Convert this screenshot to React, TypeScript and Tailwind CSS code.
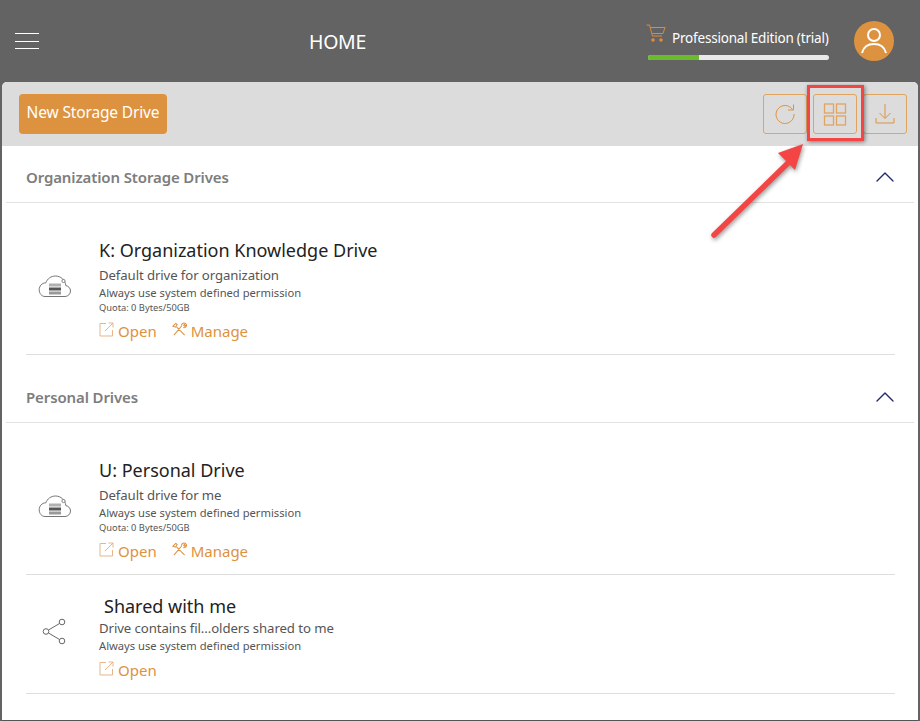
import { ChevronUp } from 'lucide-react'

const font = "font-['Noto_Sans','Open_Sans',sans-serif]"

function OpenIcon() {
  return (
    <svg width="15" height="15" viewBox="0 0 15 15" fill="none" stroke="#e8b58a" strokeWidth="1" className="mr-1 mt-[-3px]">
      <path d="M7 1.500H1v12.500h12.500V8" />
      <path d="M6 9l8-8M9.500 1H14v4.500" />
    </svg>
  )
}

function ToolsIcon() {
  return (
    <svg width="15" height="14" viewBox="0 0 16 15" fill="none" stroke="#dd9240" strokeWidth="1.100" className="ml-[1px] mr-1 mt-[-4px]">
      <path d="M2 14L10.500 4M1 4.500l3-3 1.500 1L4 5.500zM5 5.500l8.500 8.500M10 3.500c.5-2 2.500-3 4.500-2l-2 2 1 1 2-1.500c.3 2-1.500 3.500-3.500 3" />
    </svg>
  )
}

function CloudIcon() {
  return (
    <svg width="34" height="24" viewBox="0 0 34 24" fill="none">
      <path
        d="M7 22.500h20c3 0 5.500-2.500 5.500-5.500 0-2.800-2-5-4.700-5.400-.4-5.500-5-9.600-10.300-9.600-4.500 0-8.300 2.800-9.700 6.900C4 8.800 1.200 12 1.200 15.800c0 3.700 2.500 6.700 5.800 6.700z"
        stroke="#666"
        strokeWidth="0.9"
      />
      <circle cx="25.500" cy="7" r="1.600" fill="#fff" stroke="#666" strokeWidth="0.8" />
      <rect x="11" y="9.500" width="12" height="3" fill="#b0b0b0" />
      <rect x="11" y="13.500" width="12" height="3" fill="#555" />
      <rect x="11" y="17.500" width="12" height="3" fill="#999" />
    </svg>
  )
}

function ShareIcon() {
  return (
    <svg width="24" height="27" viewBox="0 0 24 27" fill="none" stroke="#666" strokeWidth="1">
      <circle cx="20" cy="4" r="2.800" />
      <circle cx="4" cy="13.500" r="2.800" />
      <circle cx="20" cy="23" r="2.800" />
      <path d="M17.500 5.500L6.500 12M6.500 15L17.500 21.500" />
    </svg>
  )
}

function SectionHeader({ title }: { title: string }) {
  return (
    <div className="mx-[4px] flex h-[57px] items-center justify-between border-b border-[#e2e2e2] pl-[20px] pr-[13px] pt-[6px]">
      <span className="text-[15px] font-semibold tracking-[-0.12px] text-[#7d7d7d]">{title}</span>
      <ChevronUp size={32} strokeWidth={1} className="text-[#1e2a6a]" />
    </div>
  )
}

function Actions({ manage }: { manage?: boolean }) {
  return (
    <div className="flex items-center text-[15px] leading-[20px] text-[#dd9240]">
      <OpenIcon />
      <span>Open</span>
      {manage && (
        <>
          <span className="w-[14px]" />
          <ToolsIcon />
          <span>Manage</span>
        </>
      )}
    </div>
  )
}

function DriveItem({ title, desc, manage }: { title: string; desc: string; manage?: boolean }) {
  return (
    <div className="ml-[24px] mr-[23px] flex h-[152px] border-b border-[#dedede]">
      <div className="w-[73px] pl-[12px] pt-[71px]">
        <CloudIcon />
      </div>
      <div className="pt-[34px]">
        <div className="text-[18px] leading-[26px] text-[#222]">{title}</div>
        <div className="mt-[3px] text-[13.200px] leading-[18px] tracking-[-0.1px] text-[#555]">{desc}</div>
        <div className="mt-[1px] text-[11.200px] leading-[16px] text-[#555]">Always use system defined permission</div>
        <div className="text-[9.300px] leading-[13px] text-[#555]">Quota: 0 Bytes/50GB</div>
        <div className="mt-[7px]">
          <Actions manage={manage} />
        </div>
      </div>
    </div>
  )
}

function SharedItem() {
  return (
    <div className="ml-[24px] mr-[23px] flex h-[119px] border-b border-[#dedede]">
      <div className="w-[73px] pl-[16px] pt-[43px]">
        <ShareIcon />
      </div>
      <div className="pt-[18px]">
        <div className="pl-[5px] text-[18px] leading-[26px] text-[#222]">Shared with me</div>
        <div className="text-[13.200px] leading-[18px] tracking-[-0.08px] text-[#555]">Drive contains fil...olders shared to me</div>
        <div className="mt-[1px] text-[11.200px] leading-[16px] text-[#555]">Always use system defined permission</div>
        <div className="mt-[6px]">
          <Actions />
        </div>
      </div>
    </div>
  )
}

function ToolButton({ children }: { children: React.ReactNode }) {
  return (
    <div className="flex h-[40px] w-[44px] items-center justify-center rounded-[3px] border border-[#e0a460]">{children}</div>
  )
}

export default function App() {
  return (
    <div className={`relative h-[721px] w-[920px] overflow-hidden bg-[#636363] ${font}`}>
      {/* Top bar */}
      <header className="flex h-[82px] items-center">
        <div className="ml-[15px] flex w-[24px] flex-col gap-[6.500px]">
          <span className="h-px bg-white" />
          <span className="h-px bg-white" />
          <span className="h-px bg-white" />
        </div>
        <div className="ml-[270px] w-[58px] whitespace-nowrap pt-[2px] text-[19.500px] tracking-[-0.3px] text-white">HOME</div>
        <div className="ml-[279px] flex w-[184px] flex-col pt-[7px]">
          <div className="flex items-start">
            <svg width="20" height="20" viewBox="0 0 20 20" fill="none" stroke="#dd8a3c" strokeWidth="1" className="mt-[-6px]">
              <path d="M0.500 2h3l3 11h9.500M4.500 4.500h14.500l-2 6H6.200" />
              <circle cx="7" cy="17" r="1.300" fill="#dd8a3c" />
              <circle cx="15" cy="17" r="1.300" fill="#dd8a3c" />
            </svg>
            <span className="ml-[6px] whitespace-nowrap text-[13.500px] leading-[18px] tracking-[-0.2px] text-white">Professional Edition (trial)</span>
          </div>
          <div className="ml-[2px] mt-[8px] flex h-[5px] w-[181px] overflow-hidden rounded-full bg-[#e9e9e9]">
            <div className="w-[51px] bg-[#6cbb2c]" />
          </div>
        </div>
        <div className="ml-[24px] flex h-[40px] w-[40px] items-center justify-center rounded-full bg-[#dd9240]">
          <svg width="28" height="30" viewBox="0 0 28 30" fill="none" stroke="#fff" strokeWidth="2">
            <circle cx="14" cy="9" r="6" />
            <path d="M2 27c1.500-6 6-9 12-9s10.500 3 12 9" />
          </svg>
        </div>
      </header>

      {/* Main card */}
      <main className="mx-[2px] h-[639px] overflow-hidden rounded-t-[5px] border-b border-[#555] bg-white">
        <div className="flex h-[64px] items-center justify-between bg-[#dcdcdc] pl-[17px] pr-[11px]">
          <button className="h-[40px] w-[148px] rounded-[4px] bg-[#dd9240] pb-[3px] text-center text-[15.500px] tracking-[-0.15px] text-white">New Storage Drive</button>
          <div className="flex gap-[6px]">
            <ToolButton>
              <svg width="22" height="22" viewBox="0 0 22 22" fill="none" stroke="#dd9240" strokeWidth="1">
                <path d="M18.500 6.500A9 9 0 1 0 20 11" />
                <path d="M19.500 1.500v5.500h-5.500" />
              </svg>
            </ToolButton>
            <ToolButton>
              <svg width="24" height="23" viewBox="0 0 24 23" fill="none" stroke="#e0a460" strokeWidth="1.300">
                <rect x="1.500" y="1" width="9" height="9" />
                <rect x="13.500" y="1" width="9" height="9" />
                <rect x="1.500" y="13" width="9" height="9" />
                <rect x="13.500" y="13" width="9" height="9" />
              </svg>
            </ToolButton>
            <ToolButton>
              <svg width="20" height="22" viewBox="0 0 20 22" fill="none" stroke="#dd9240" strokeWidth="1">
                <path d="M10 1v14M4.500 10l5.500 5.500 5.500-5.500" />
                <path d="M1 15v5h18v-5" />
              </svg>
            </ToolButton>
          </div>
        </div>

        <SectionHeader title="Organization Storage Drives" />
        <DriveItem title="K: Organization Knowledge Drive" desc="Default drive for organization" manage />

        <div className="mt-[11px]">
          <SectionHeader title="Personal Drives" />
        </div>
        <DriveItem title="U: Personal Drive" desc="Default drive for me" manage />
        <SharedItem />
      </main>

      {/* Annotation overlay */}
      <div className="absolute left-[807px] top-[85px] h-[56px] w-[57px] border-[3px] border-[#f44545] shadow-[1px_1px_4px_rgba(0,0,0,0.45)]" />
      <svg className="absolute left-[700px] top-[135px]" width="120" height="110" viewBox="0 0 120 110" fill="none">
        <g style={{ filter: 'drop-shadow(1px 2px 2px rgba(0,0,0,0.4))' }}>
          <path d="M14 100L88 28" stroke="#f44545" strokeWidth="5.500" strokeLinecap="round" />
          <path d="M103 9L78 18L95 35Z" fill="#f44545" />
        </g>
      </svg>
    </div>
  )
}
